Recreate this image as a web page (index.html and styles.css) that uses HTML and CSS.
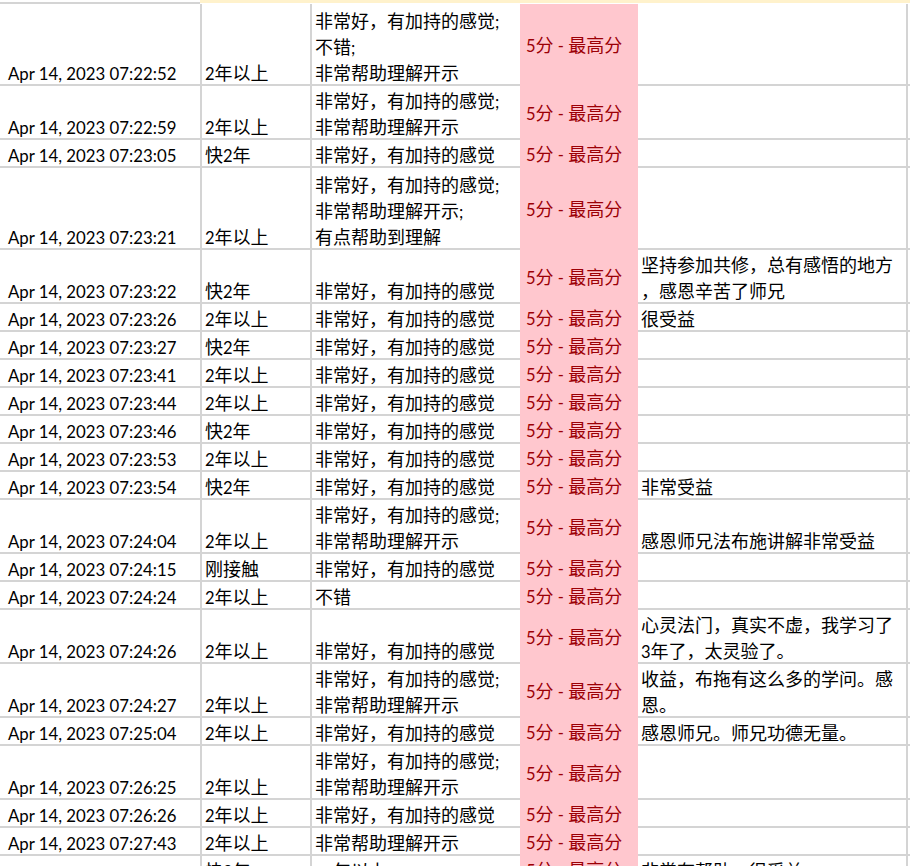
FILE: index.html
```html
<!DOCTYPE html>
<html lang="zh">
<head>
<meta charset="utf-8">
<title>Sheet</title>
<link rel="stylesheet" href="styles.css">
</head>
<body>
<div class="sheet">
  <div class="top"><div class="tw"></div><div class="ty"></div></div>

  <div class="row r3">
    <div class="cell d"><div class="t">Apr 14, 2023 07:22:52</div></div>
    <div class="cell y"><div class="t"><span class="n">2</span>年以上</div></div>
    <div class="cell a"><div class="t">非常好，有加持的感觉<span class="n">;</span><br>不错<span class="n">;</span><br>非常帮助理解开示</div></div>
    <div class="cell s"><div class="t"><span class="n">5</span>分<span class="n"> - </span>最高分</div></div>
    <div class="cell m"><div class="t"></div></div>
    <div class="cell e"></div>
  </div>

  <div class="row r2">
    <div class="cell d"><div class="t">Apr 14, 2023 07:22:59</div></div>
    <div class="cell y"><div class="t"><span class="n">2</span>年以上</div></div>
    <div class="cell a"><div class="t">非常好，有加持的感觉<span class="n">;</span><br>非常帮助理解开示</div></div>
    <div class="cell s"><div class="t"><span class="n">5</span>分<span class="n"> - </span>最高分</div></div>
    <div class="cell m"><div class="t"></div></div>
    <div class="cell e"></div>
  </div>

  <div class="row r1">
    <div class="cell d"><div class="t">Apr 14, 2023 07:23:05</div></div>
    <div class="cell y"><div class="t">快<span class="n">2</span>年</div></div>
    <div class="cell a"><div class="t">非常好，有加持的感觉</div></div>
    <div class="cell s"><div class="t"><span class="n">5</span>分<span class="n"> - </span>最高分</div></div>
    <div class="cell m"><div class="t"></div></div>
    <div class="cell e"></div>
  </div>

  <div class="row r3">
    <div class="cell d"><div class="t">Apr 14, 2023 07:23:21</div></div>
    <div class="cell y"><div class="t"><span class="n">2</span>年以上</div></div>
    <div class="cell a"><div class="t">非常好，有加持的感觉<span class="n">;</span><br>非常帮助理解开示<span class="n">;</span><br>有点帮助到理解</div></div>
    <div class="cell s"><div class="t"><span class="n">5</span>分<span class="n"> - </span>最高分</div></div>
    <div class="cell m"><div class="t"></div></div>
    <div class="cell e"></div>
  </div>

  <div class="row r2">
    <div class="cell d"><div class="t">Apr 14, 2023 07:23:22</div></div>
    <div class="cell y"><div class="t">快<span class="n">2</span>年</div></div>
    <div class="cell a"><div class="t">非常好，有加持的感觉</div></div>
    <div class="cell s"><div class="t"><span class="n">5</span>分<span class="n"> - </span>最高分</div></div>
    <div class="cell m"><div class="t">坚持参加共修，总有感悟的地方<br>，感恩辛苦了师兄</div></div>
    <div class="cell e"></div>
  </div>

  <div class="row r1">
    <div class="cell d"><div class="t">Apr 14, 2023 07:23:26</div></div>
    <div class="cell y"><div class="t"><span class="n">2</span>年以上</div></div>
    <div class="cell a"><div class="t">非常好，有加持的感觉</div></div>
    <div class="cell s"><div class="t"><span class="n">5</span>分<span class="n"> - </span>最高分</div></div>
    <div class="cell m"><div class="t">很受益</div></div>
    <div class="cell e"></div>
  </div>

  <div class="row r1">
    <div class="cell d"><div class="t">Apr 14, 2023 07:23:27</div></div>
    <div class="cell y"><div class="t">快<span class="n">2</span>年</div></div>
    <div class="cell a"><div class="t">非常好，有加持的感觉</div></div>
    <div class="cell s"><div class="t"><span class="n">5</span>分<span class="n"> - </span>最高分</div></div>
    <div class="cell m"><div class="t"></div></div>
    <div class="cell e"></div>
  </div>

  <div class="row r1">
    <div class="cell d"><div class="t">Apr 14, 2023 07:23:41</div></div>
    <div class="cell y"><div class="t"><span class="n">2</span>年以上</div></div>
    <div class="cell a"><div class="t">非常好，有加持的感觉</div></div>
    <div class="cell s"><div class="t"><span class="n">5</span>分<span class="n"> - </span>最高分</div></div>
    <div class="cell m"><div class="t"></div></div>
    <div class="cell e"></div>
  </div>

  <div class="row r1">
    <div class="cell d"><div class="t">Apr 14, 2023 07:23:44</div></div>
    <div class="cell y"><div class="t"><span class="n">2</span>年以上</div></div>
    <div class="cell a"><div class="t">非常好，有加持的感觉</div></div>
    <div class="cell s"><div class="t"><span class="n">5</span>分<span class="n"> - </span>最高分</div></div>
    <div class="cell m"><div class="t"></div></div>
    <div class="cell e"></div>
  </div>

  <div class="row r1">
    <div class="cell d"><div class="t">Apr 14, 2023 07:23:46</div></div>
    <div class="cell y"><div class="t">快<span class="n">2</span>年</div></div>
    <div class="cell a"><div class="t">非常好，有加持的感觉</div></div>
    <div class="cell s"><div class="t"><span class="n">5</span>分<span class="n"> - </span>最高分</div></div>
    <div class="cell m"><div class="t"></div></div>
    <div class="cell e"></div>
  </div>

  <div class="row r1">
    <div class="cell d"><div class="t">Apr 14, 2023 07:23:53</div></div>
    <div class="cell y"><div class="t"><span class="n">2</span>年以上</div></div>
    <div class="cell a"><div class="t">非常好，有加持的感觉</div></div>
    <div class="cell s"><div class="t"><span class="n">5</span>分<span class="n"> - </span>最高分</div></div>
    <div class="cell m"><div class="t"></div></div>
    <div class="cell e"></div>
  </div>

  <div class="row r1">
    <div class="cell d"><div class="t">Apr 14, 2023 07:23:54</div></div>
    <div class="cell y"><div class="t">快<span class="n">2</span>年</div></div>
    <div class="cell a"><div class="t">非常好，有加持的感觉</div></div>
    <div class="cell s"><div class="t"><span class="n">5</span>分<span class="n"> - </span>最高分</div></div>
    <div class="cell m"><div class="t">非常受益</div></div>
    <div class="cell e"></div>
  </div>

  <div class="row r2">
    <div class="cell d"><div class="t">Apr 14, 2023 07:24:04</div></div>
    <div class="cell y"><div class="t"><span class="n">2</span>年以上</div></div>
    <div class="cell a"><div class="t">非常好，有加持的感觉<span class="n">;</span><br>非常帮助理解开示</div></div>
    <div class="cell s"><div class="t"><span class="n">5</span>分<span class="n"> - </span>最高分</div></div>
    <div class="cell m"><div class="t">感恩师兄法布施讲解非常受益</div></div>
    <div class="cell e"></div>
  </div>

  <div class="row r1">
    <div class="cell d"><div class="t">Apr 14, 2023 07:24:15</div></div>
    <div class="cell y"><div class="t">刚接触</div></div>
    <div class="cell a"><div class="t">非常好，有加持的感觉</div></div>
    <div class="cell s"><div class="t"><span class="n">5</span>分<span class="n"> - </span>最高分</div></div>
    <div class="cell m"><div class="t"></div></div>
    <div class="cell e"></div>
  </div>

  <div class="row r1">
    <div class="cell d"><div class="t">Apr 14, 2023 07:24:24</div></div>
    <div class="cell y"><div class="t"><span class="n">2</span>年以上</div></div>
    <div class="cell a"><div class="t">不错</div></div>
    <div class="cell s"><div class="t"><span class="n">5</span>分<span class="n"> - </span>最高分</div></div>
    <div class="cell m"><div class="t"></div></div>
    <div class="cell e"></div>
  </div>

  <div class="row r2">
    <div class="cell d"><div class="t">Apr 14, 2023 07:24:26</div></div>
    <div class="cell y"><div class="t"><span class="n">2</span>年以上</div></div>
    <div class="cell a"><div class="t">非常好，有加持的感觉</div></div>
    <div class="cell s"><div class="t"><span class="n">5</span>分<span class="n"> - </span>最高分</div></div>
    <div class="cell m"><div class="t">心灵法门，真实不虚，我学习了<br><span class="n">3</span>年了，太灵验了。</div></div>
    <div class="cell e"></div>
  </div>

  <div class="row r2">
    <div class="cell d"><div class="t">Apr 14, 2023 07:24:27</div></div>
    <div class="cell y"><div class="t"><span class="n">2</span>年以上</div></div>
    <div class="cell a"><div class="t">非常好，有加持的感觉<span class="n">;</span><br>非常帮助理解开示</div></div>
    <div class="cell s"><div class="t"><span class="n">5</span>分<span class="n"> - </span>最高分</div></div>
    <div class="cell m"><div class="t">收益，布拖有这么多的学问。感<br>恩。</div></div>
    <div class="cell e"></div>
  </div>

  <div class="row r1">
    <div class="cell d"><div class="t">Apr 14, 2023 07:25:04</div></div>
    <div class="cell y"><div class="t"><span class="n">2</span>年以上</div></div>
    <div class="cell a"><div class="t">非常好，有加持的感觉</div></div>
    <div class="cell s"><div class="t"><span class="n">5</span>分<span class="n"> - </span>最高分</div></div>
    <div class="cell m"><div class="t">感恩师兄。师兄功德无量。</div></div>
    <div class="cell e"></div>
  </div>

  <div class="row r2">
    <div class="cell d"><div class="t">Apr 14, 2023 07:26:25</div></div>
    <div class="cell y"><div class="t"><span class="n">2</span>年以上</div></div>
    <div class="cell a"><div class="t">非常好，有加持的感觉<span class="n">;</span><br>非常帮助理解开示</div></div>
    <div class="cell s"><div class="t"><span class="n">5</span>分<span class="n"> - </span>最高分</div></div>
    <div class="cell m"><div class="t"></div></div>
    <div class="cell e"></div>
  </div>

  <div class="row r1">
    <div class="cell d"><div class="t">Apr 14, 2023 07:26:26</div></div>
    <div class="cell y"><div class="t"><span class="n">2</span>年以上</div></div>
    <div class="cell a"><div class="t">非常好，有加持的感觉</div></div>
    <div class="cell s"><div class="t"><span class="n">5</span>分<span class="n"> - </span>最高分</div></div>
    <div class="cell m"><div class="t"></div></div>
    <div class="cell e"></div>
  </div>

  <div class="row r1">
    <div class="cell d"><div class="t">Apr 14, 2023 07:27:43</div></div>
    <div class="cell y"><div class="t"><span class="n">2</span>年以上</div></div>
    <div class="cell a"><div class="t">非常帮助理解开示</div></div>
    <div class="cell s"><div class="t"><span class="n">5</span>分<span class="n"> - </span>最高分</div></div>
    <div class="cell m"><div class="t"></div></div>
    <div class="cell e"></div>
  </div>

  <div class="row r1">
    <div class="cell d"><div class="t"></div></div>
    <div class="cell y"><div class="t">快<span class="n">2</span>年</div></div>
    <div class="cell a"><div class="t">一年以上</div></div>
    <div class="cell s"><div class="t"><span class="n">5</span>分<span class="n"> - </span>最高分</div></div>
    <div class="cell m"><div class="t">非常有帮助，很受益</div></div>
    <div class="cell e"></div>
  </div>
</div>
</body>
</html>
```

FILE: styles.css
```css
html, body {
  margin: 0;
  padding: 0;
  background: #ffffff;
}

body {
  width: 910px;
  height: 866px;
  overflow: hidden;
}

.sheet {
  width: 910px;
  display: flex;
  flex-direction: column;
}

.top {
  display: grid;
  grid-template-columns: 200px 1fr;
  height: 4px;
}

.tw {
  box-sizing: border-box;
  height: 4px;
  border-bottom: 2px solid #d4d4d4;
}

.ty {
  height: 3px;
  background: #fff2cc;
}

.row {
  display: grid;
  grid-template-columns: 202px 110px 208px 118px 270px 1fr;
  flex: none;
}

.r1 { height: 28px; }
.r2 { height: 54px; }
.r3 { height: 82px; }

.cell {
  box-sizing: border-box;
  height: 100%;
  border-bottom: 2px solid #d4d4d4;
  display: flex;
  flex-direction: column;
  justify-content: flex-end;
  overflow: hidden;
  white-space: nowrap;
  color: #000000;
  font-family: "Noto Sans CJK SC", sans-serif;
  font-size: 18px;
  line-height: 26px;
}

.t {
  margin-bottom: -1px;
}

.n {
  font-family: "Lato", sans-serif;
  font-size: 16.5px;
  line-height: 16px;
}

.d {
  border-right: 2px solid #d4d4d4;
  padding-left: 8px;
  font-family: "Lato", sans-serif;
  font-size: 16.8px;
  line-height: 20px;
}

.d .t {
  margin-bottom: 0;
}

.y {
  border-right: 2px solid #d4d4d4;
  padding-left: 3px;
}

.a {
  padding-left: 3px;
}

.s {
  background: #ffc7ce;
  border-bottom-color: #ffc7ce;
  color: #9c0006;
  justify-content: center;
  padding-left: 6px;
}

.s .t {
  margin-bottom: 1px;
}

.m {
  border-right: 2px solid #d4d4d4;
  padding-left: 3px;
}
```
